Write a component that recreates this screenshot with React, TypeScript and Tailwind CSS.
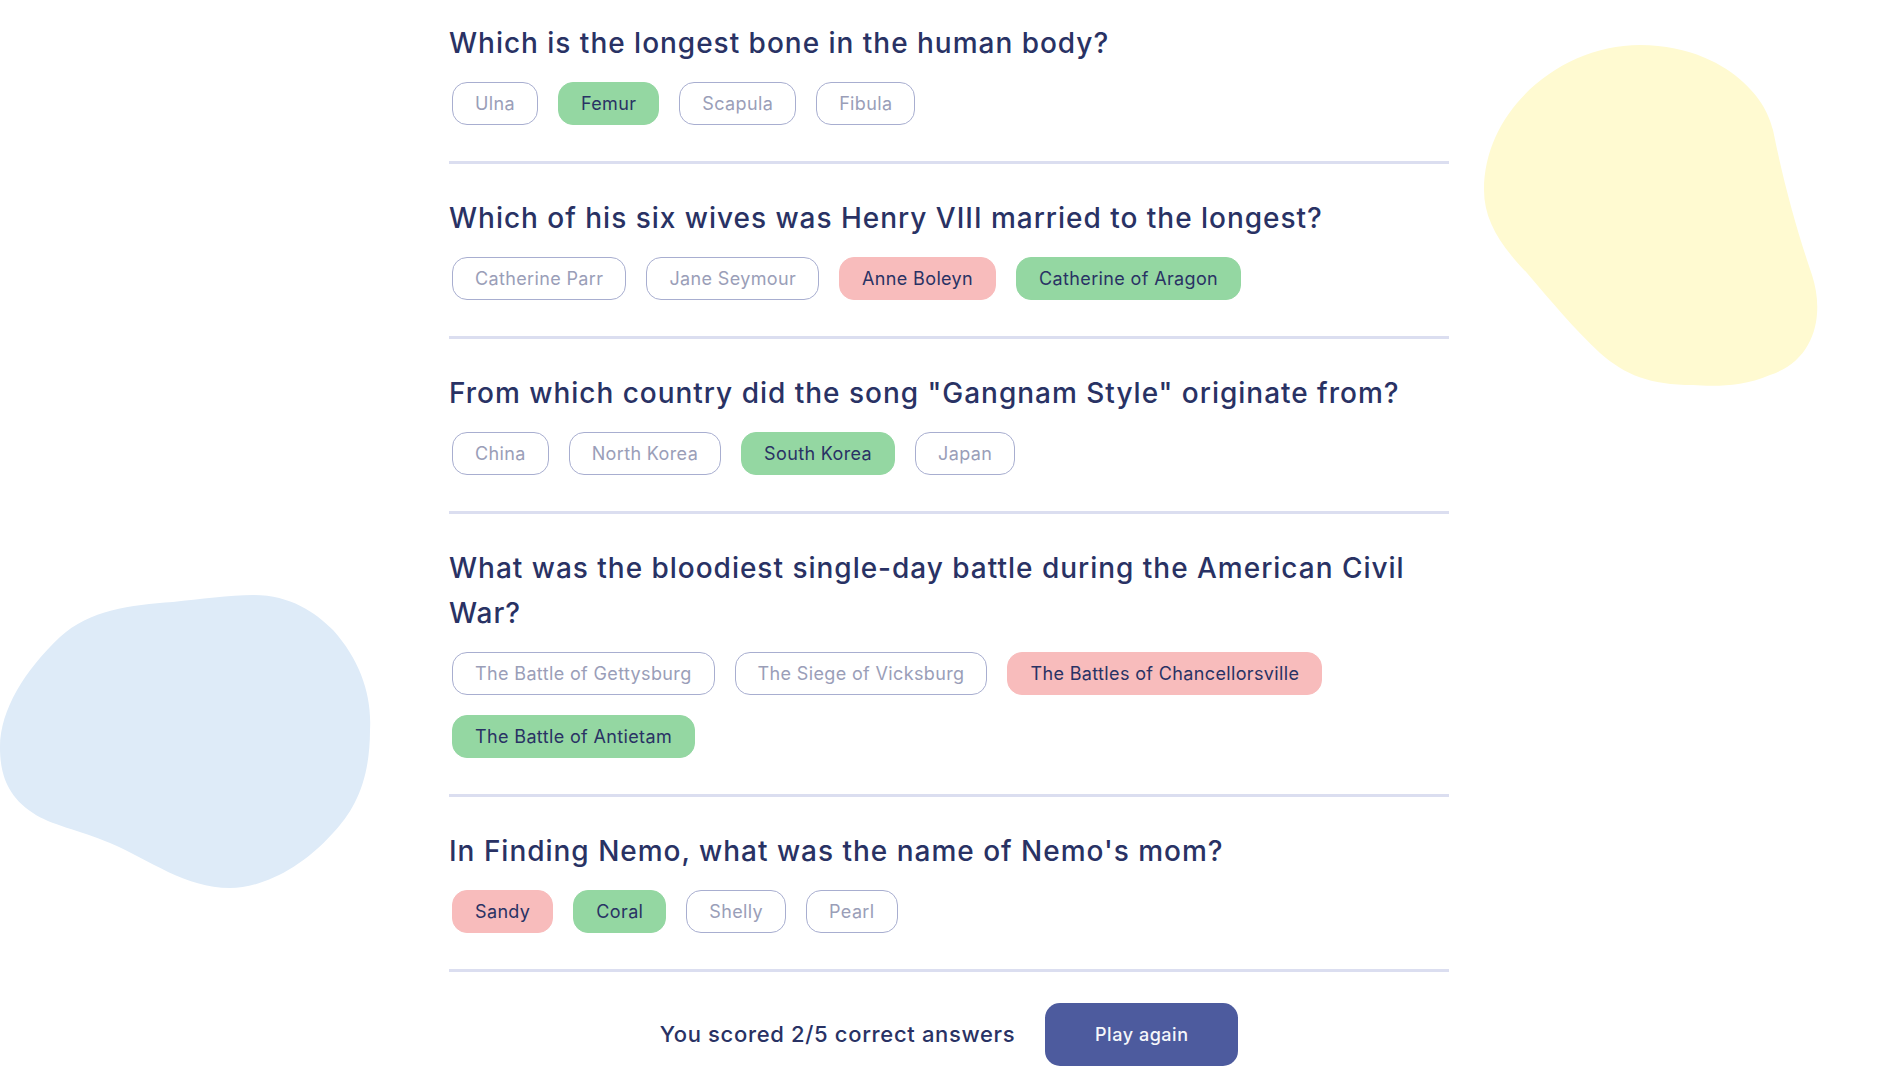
import React from "react";

type Answer = { text: string; state: "none" | "correct" | "wrong" };
type Q = { question: string; answers: Answer[] };

const questions: Q[] = [
  {
    question: "Which is the longest bone in the human body?",
    answers: [
      { text: "Ulna", state: "none" },
      { text: "Femur", state: "correct" },
      { text: "Scapula", state: "none" },
      { text: "Fibula", state: "none" },
    ],
  },
  {
    question: "Which of his six wives was Henry VIII married to the longest?",
    answers: [
      { text: "Catherine Parr", state: "none" },
      { text: "Jane Seymour", state: "none" },
      { text: "Anne Boleyn", state: "wrong" },
      { text: "Catherine of Aragon", state: "correct" },
    ],
  },
  {
    question: 'From which country did the song "Gangnam Style" originate from?',
    answers: [
      { text: "China", state: "none" },
      { text: "North Korea", state: "none" },
      { text: "South Korea", state: "correct" },
      { text: "Japan", state: "none" },
    ],
  },
  {
    question: "What was the bloodiest single-day battle during the American Civil War?",
    answers: [
      { text: "The Battle of Gettysburg", state: "none" },
      { text: "The Siege of Vicksburg", state: "none" },
      { text: "The Battles of Chancellorsville", state: "wrong" },
      { text: "The Battle of Antietam", state: "correct" },
    ],
  },
  {
    question: "In Finding Nemo, what was the name of Nemo's mom?",
    answers: [
      { text: "Sandy", state: "wrong" },
      { text: "Coral", state: "correct" },
      { text: "Shelly", state: "none" },
      { text: "Pearl", state: "none" },
    ],
  },
];

function AnswerPill({ a }: { a: Answer }) {
  if (a.state === "correct") {
    return (
      <div className="h-[43px] px-[22px] flex items-center rounded-[15px] bg-[#94D7A2] border-[1.5px] border-[#94D7A2] text-[#293264] text-[18px] tracking-[0.02em]">
        {a.text}
      </div>
    );
  }
  if (a.state === "wrong") {
    return (
      <div className="h-[43px] px-[22px] flex items-center rounded-[15px] bg-[#F8BCBC] border-[1.5px] border-[#F8BCBC] text-[#293264] text-[18px] tracking-[0.02em]">
        {a.text}
      </div>
    );
  }
  return (
    <div className="h-[43px] px-[22px] flex items-center rounded-[15px] bg-white border-[1.5px] border-[#A8AED0] text-[#9A9EB8] text-[18px] tracking-[0.02em]">
      {a.text}
    </div>
  );
}

export default function App() {
  return (
    <div
      className="relative min-h-[1086px] w-full bg-white overflow-hidden"
      style={{ fontFamily: "Inter, 'Noto Sans', 'Liberation Sans', sans-serif" }}
    >
      <svg
        className="absolute left-[1480px] top-[40px]"
        width="345"
        height="350"
        viewBox="0 0 345 350"
      >
        <path
          d="M160,5 C210,5 245,25 263,42 C285,62 290,80 293,90 C305,150 320,200 332,235 C345,275 335,320 290,335 C260,348 230,346 213,345 C170,345 145,335 120,313 C95,290 70,260 47,233 C20,205 4,180 4,150 C4,70 80,5 160,5 Z"
          fill="#FFFAD1"
        />
      </svg>
      <svg
        className="absolute left-0 top-[590px]"
        width="375"
        height="302"
        viewBox="0 0 375 302"
      >
        <path
          d="M173,12 C200,9 230,5 253,5 C290,5 315,22 333,40 C360,70 372,105 370,140 C370,190 355,220 333,243 C300,280 260,298 230,298 C185,298 150,270 110,253 C80,240 50,235 33,223 C5,205 0,180 0,157 C0,120 25,80 60,47 C90,20 130,15 173,12 Z"
          fill="#DEEBF8"
        />
      </svg>

      <main className="relative mx-auto w-[1000px] pt-[21px] pb-[20px]">
        {questions.map((q, i) => (
          <section key={i} className="pb-[32px]">
            <h2 className="text-[28px] leading-[45px] font-medium tracking-[0.035em] text-[#293264]">
              {q.question}
            </h2>
            <div className="mt-[16px] pl-[3px] flex flex-wrap gap-x-[20px] gap-y-[20px]">
              {q.answers.map((a, j) => (
                <AnswerPill key={j} a={a} />
              ))}
            </div>
            <div className="mt-[36px] h-[3px] bg-[#DBDEF0]" />
          </section>
        ))}
        <div className="flex items-center justify-center gap-[30px] -mt-[1px]">
          <span className="text-[22px] font-medium tracking-[0.03em] text-[#293264]">
            You scored 2/5 correct answers
          </span>
          <button className="w-[193px] h-[63px] rounded-[15px] bg-[#4D5B9E] text-[#F5F7FB] text-[18px] font-medium tracking-[0.03em]">
            Play again
          </button>
        </div>
      </main>
    </div>
  );
}
